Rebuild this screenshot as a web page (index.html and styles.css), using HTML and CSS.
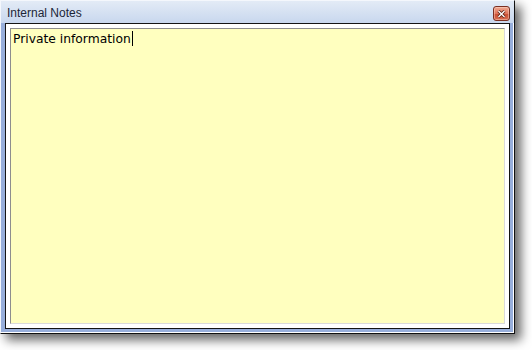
FILE: index.html
```html
<!DOCTYPE html>
<html lang="en">

<head>
    <meta charset="UTF-8">
    <meta name="viewport" content="width=device-width, initial-scale=1.0">
    <title>Internal Notes</title>
    <link rel="stylesheet" href="styles.css">
</head>

<body>
    <div class="window">
        <div class="titlebar">
            <span class="title">Internal Notes</span>
            <div class="btn-close">
                <svg width="9" height="8" viewBox="0 0 9 8">
                    <path d="M1.5 1 L7.5 7 M7.5 1 L1.5 7" stroke="#5a1e12" stroke-width="3" fill="none"/>
                    <path d="M1.5 1 L7.5 7 M7.5 1 L1.5 7" stroke="#ffffff" stroke-width="1.4" fill="none"/>
                </svg>
            </div>
        </div>
        <div class="frame">
            <div class="panel">
                <div class="note">
                    <span class="note-text">Private information</span><span class="caret"></span>
                </div>
            </div>
        </div>
    </div>
</body>

</html>
```

FILE: styles.css
```css
* {
    margin: 0;
    padding: 0;
    box-sizing: border-box;
}

body {
    background-color: #ffffff;
    width: 532px;
    height: 350px;
    overflow: hidden;
}

.window {
    width: 515px;
    height: 334px;
    display: flex;
    flex-direction: column;
    background-color: #97aedb;
    border-top: 1px solid #f4f7fc;
    border-left: 1px solid #f4f7fc;
    border-right: 1px solid #111111;
    border-bottom: 1px solid #111111;
    box-shadow: inset -1px -1px 0 #ffffff, 6px 6px 10px rgba(0, 0, 0, 0.6);
}

.titlebar {
    height: 22px;
    display: flex;
    justify-content: space-between;
    align-items: flex-start;
    background: linear-gradient(#e3ebf6, #c8d7ee);
}

.title {
    font-family: "Liberation Sans", Arial, sans-serif;
    font-size: 12px;
    color: #1c2638;
    padding-left: 6px;
    line-height: 14px;
    margin-top: 5px;
}

.btn-close {
    width: 17px;
    height: 15px;
    margin-top: 5px;
    margin-right: 4px;
    border: 1px solid #7a2f22;
    border-radius: 3px;
    background: linear-gradient(#f0ab94, #e0735a 50%, #c94d33 51%, #d66a4f);
    box-shadow: inset 0 0 0 1px rgba(255, 220, 205, 0.45);
    display: flex;
    align-items: center;
    justify-content: center;
}

.frame {
    flex: 1;
    display: flex;
    padding: 0 4px 4px 4px;
}

.panel {
    flex: 1;
    display: flex;
    border: 1px solid #141414;
    background-color: #ffffff;
    padding: 4px;
}

.note {
    flex: 1;
    background-color: #ffffbf;
    border-top: 1px solid #8e8e8e;
    border-left: 1px solid #8e8e8e;
    border-right: 1px solid #dadada;
    border-bottom: 1px solid #dadada;
    padding: 2px 2px;
    font-family: "DejaVu Sans", Verdana, sans-serif;
    font-size: 12.3px;
    line-height: 16px;
    color: #000000;
}

.note-text {
    vertical-align: top;
}

.caret {
    display: inline-block;
    width: 1px;
    height: 15px;
    margin-left: 1px;
    background-color: #000000;
    vertical-align: top;
}
```
